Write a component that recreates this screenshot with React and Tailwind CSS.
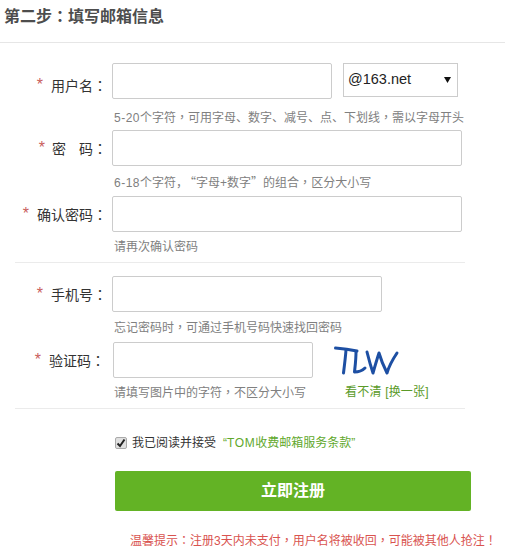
const FONT = "font-['Liberation_Sans','Noto_Sans_CJK_SC',sans-serif]";

function P({ children }) {
  return <span className="font-['Noto_Sans_CJK_TC',sans-serif]">{children}</span>;
}

function Label({ children, pr = "pr-[5px]", pt = "pt-[0px]", gap = "mr-[8px]" }) {
  return (
    <div className={`w-[112px] h-[36px] shrink-0 flex justify-end items-center ${pr} ${pt} text-[14px] text-[#333] leading-[18px] whitespace-nowrap`}>
      <span className={`text-[16px] leading-[16px] mb-[1px] text-[#c9605c] ${gap}`}>*</span>
      <span>{children}</span>
    </div>
  );
}

function Input({ w }) {
  return <input className={`${w} h-[36px] block bg-white border border-[#ccc] rounded-[2px] shrink-0`} />;
}

function Hint({ children, cls = "" }) {
  return <p className={`text-[12px] leading-[16px] h-[16px] text-[#808080] whitespace-nowrap ${cls}`}>{children}</p>;
}

function Captcha() {
  return (
    <svg width="70" height="36" viewBox="0 0 70 36" className="ml-[19px] shrink-0" fill="none" stroke="#1d4fa3" strokeWidth="3" strokeLinecap="round" strokeLinejoin="round">
      <path d="M3.5 6 C10 6.5 18 7.5 25 9" />
      <path d="M14 8 C13.5 15 12.5 23 11.5 31" />
      <path d="M24 10 C24 18 23 25 22.5 30 C26 30 30 29 33 26" />
      <path d="M35 10 C37 18 39 25 41 31 C43 24 45 17 47 11 C49 18 52 25 55 31 C57 24 61 17 65 11" />
    </svg>
  );
}

export default function App() {
  return (
    <div className={`w-[505px] h-[558px] bg-white overflow-hidden ${FONT}`}>
      <h2 className="h-[43px] pl-[4px] pt-[4px] text-[16px] leading-[22px] font-bold text-[#4d4d4d] border-b border-[#e6e6e6]">第二步<P>：</P>填写邮箱信息</h2>

      <section className="pt-[20px]">
        <div className="flex items-start">
          <Label pt="pt-[8px]">用户名<P>：</P></Label>
          <Input w="w-[220px]" />
          <div className="ml-[11px] w-[115px] h-[34px] border border-[#ccc] flex items-center justify-between pl-[4px] pr-[6px] text-[14.5px] text-[#222] shrink-0">
            <span>@163.net</span>
            <svg width="7" height="6" viewBox="0 0 7 6"><path d="M0 0h7L3.5 6z" fill="#111" /></svg>
          </div>
        </div>
        <Hint cls="ml-[114px] mt-[10px]"><span className="tracking-[0.5px]">5-20</span>个字符<P>，</P>可用字母、数字、减号、点、下划线<P>，</P>需以字母开头</Hint>

        <div className="flex items-start mt-[5px]">
          <Label gap="mr-[7px]">密<span className="ml-[13px]">码</span><P>：</P></Label>
          <Input w="w-[350px]" />
        </div>
        <Hint cls="ml-[114px] mt-[8px]"><span className="tracking-[0.5px]">6-18</span>个字符，<span className="ml-[2px] font-['Noto_Sans_CJK_SC',sans-serif]">“</span>字母+数字<span className="font-['Noto_Sans_CJK_SC',sans-serif]">”</span>的组合<P>，</P>区分大小写</Hint>

        <div className="flex items-start mt-[6px]">
          <Label>确认密码<P>：</P></Label>
          <Input w="w-[350px]" />
        </div>
        <Hint cls="ml-[114px] mt-[7px]">请再次确认密码</Hint>
      </section>

      <div className="mx-[15px] w-[450px] mt-[7px] border-t border-[#ebebeb]" />

      <section className="pt-[13px]">
        <div className="flex items-start">
          <Label>手机号<P>：</P></Label>
          <Input w="w-[270px]" />
        </div>
        <Hint cls="ml-[114px] mt-[7px]">忘记密码时<P>，</P>可通过手机号码快速找回密码</Hint>

        <div className="flex items-start mt-[7px]">
          <Label pr="pr-[7px]">验证码<P>：</P></Label>
          <Input w="w-[200px] ml-[1px]" />
          <Captcha />
        </div>
        <div className="flex items-center mt-[6px]">
          <Hint cls="ml-[114px] w-[231px]">请填写图片中的字符<P>，</P>不区分大小写</Hint>
          <a className="text-[12px] leading-[16px] tracking-[0.2px] text-[#5a9a28] whitespace-nowrap">看不清 [换一张]</a>
        </div>
      </section>

      <div className="mx-[15px] w-[450px] mt-[8px] border-t border-[#ebebeb]" />

      <section className="pl-[115px] pt-[26px]">
        <label className="flex items-center h-[16px] text-[12px] whitespace-nowrap">
          <span className="relative w-[12px] h-[12px] shrink-0">
            <input type="checkbox" defaultChecked className="appearance-none block w-[12px] h-[12px] m-0 rounded-[2px] border border-[#aaa] bg-[#e0e0e0]" />
            <svg className="absolute left-[1px] top-[1px]" width="10" height="10" viewBox="0 0 10 10" fill="none"><path d="M1.5 5.5 L4 8 L8.5 1.5" stroke="#222" strokeWidth="2" /></svg>
          </span>
          <span className="ml-[5px] text-[#333]">我已阅读并接受</span>
          <a className="ml-[7px] text-[#5fa82c]">“<span className="tracking-[0.6px]">TOM</span>收费邮箱服务条款”</a>
        </label>
        <button className="block mt-[20px] w-[356px] h-[40px] rounded-[2px] bg-[#63b325] text-white text-[16px] font-bold">立即注册</button>
        <p className="ml-[15px] mt-[21px] text-[12px] leading-[16px] h-[16px] text-[#d9534f] whitespace-nowrap">温馨提示<P>：</P>注册3天内未支付<P>，</P>用户名将被收回<P>，</P>可能被其他人抢注<P>！</P></p>
      </section>
    </div>
  );
}
